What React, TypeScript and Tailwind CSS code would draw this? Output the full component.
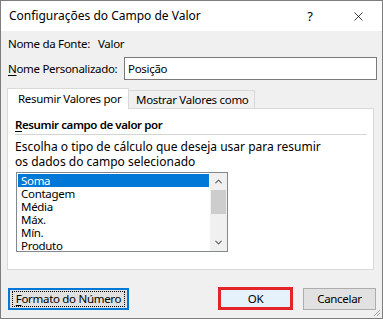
import { X, ChevronUp, ChevronDown } from "lucide-react";

const font = { fontFamily: '"Noto Sans", "Open Sans", sans-serif' };

const items = ["Soma", "Contagem", "Média", "Máx.", "Mín.", "Produto"];

export default function App() {
  return (
    <div
      className="flex h-[319px] w-[383px] flex-col overflow-hidden whitespace-nowrap border border-[#7d7d7d] text-[11.5px] leading-[16px] tracking-[-0.3px] text-black"
      style={font}
    >
      {/* title bar */}
      <div className="flex h-[30px] shrink-0 items-center bg-white pl-[8px] text-[12px] tracking-normal">
        <span>Configurações do Campo de Valor</span>
        <span className="ml-auto mr-[38px] text-[13px]">?</span>
        <X size={15} strokeWidth={1.2} className="mr-[16px]" />
      </div>

      {/* body */}
      <div className="relative flex flex-1 flex-col bg-[#f0f0f0] px-[6px]">
        <div className="mt-[5px] flex h-[16px] items-center pl-[1px]">
          <span className="w-[90px] shrink-0">Nome da Fonte:</span>
          <span>Valor</span>
        </div>

        <div className="mt-[5px] flex h-[23px] items-center pl-[1px]">
          <span className="w-[116px] shrink-0">
            <span className="underline underline-offset-2">N</span>ome
            Personalizado:
          </span>
          <div className="flex h-[23px] w-[253px] shrink-0 items-center border border-[#7a7a7a] bg-white pl-[3px]">
            Posição
          </div>
        </div>

        {/* tabs */}
        <div className="mt-[8px] flex items-end">
          <div className="relative z-10 -mb-px flex h-[21px] w-[122px] shrink-0 items-center border border-b-0 border-[#d9d9d9] bg-white pl-[10px] pb-[1px]">
            Resumir Valores por
          </div>
          <div className="flex h-[18px] w-[126px] shrink-0 items-center border border-b-0 border-l-0 border-[#d9d9d9] bg-[#f0f0f0] pl-[7px]">
            Mostrar Valores como
          </div>
        </div>

        {/* panel */}
        <div className="flex h-[162px] w-[367px] flex-col border border-[#d9d9d9] bg-white px-[7px]">
          <div className="mt-[8px] font-semibold leading-[16px] tracking-[-0.4px]">
            <span className="underline underline-offset-2">R</span>esumir campo
            de valor por
          </div>
          <div className="mt-[1px] mr-[-1px] h-px bg-[#d5d5d5]" />
          <div className="mt-[5px] text-[12px] leading-[14.5px] tracking-normal">
            Escolha o tipo de cálculo que deseja usar para resumir
            <br />
            os dados do campo selecionado
          </div>

          <div className="ml-[1px] mt-[3px] flex h-[80px] w-[212px] border border-[#828790] bg-white">
            <div className="flex flex-1 flex-col p-px">
              {items.map((it, i) => (
                <div
                  key={it}
                  className={`flex h-[13px] items-center pl-[3px] leading-[13px] ${
                    i === 0 ? "bg-[#0078d7] text-white" : ""
                  }`}
                >
                  {it}
                </div>
              ))}
            </div>
            <div className="flex w-[17px] flex-col bg-[#f0f0f0]">
              <div className="flex h-[17px] items-center justify-center">
                <ChevronUp size={11} strokeWidth={2.5} color="#606060" />
              </div>
              <div className="mx-[1px] h-[24px] bg-[#cdcdcd]" />
              <div className="flex-1" />
              <div className="flex h-[17px] items-center justify-center">
                <ChevronDown size={11} strokeWidth={2.5} color="#606060" />
              </div>
            </div>
          </div>
        </div>

        {/* buttons */}
        <div className="mt-[17px] flex items-center">
          <div className="ml-[1px] flex h-[22px] w-[121px] shrink-0 items-center justify-center border-2 border-[#0078d7] bg-[#e1e1e1]">
            <div className="flex h-[16px] w-[113px] items-center justify-center border border-dotted border-black">
              <span>
                <span className="underline underline-offset-2">F</span>ormato
                do Número
              </span>
            </div>
          </div>
          <div className="ml-[89px] flex h-[23px] w-[75px] shrink-0 items-center justify-center border-[3px] border-[#e3242b] bg-[#e5f1fb]">
            OK
          </div>
          <div className="ml-[10px] flex h-[22px] w-[73px] shrink-0 items-center justify-center border border-[#adadad] bg-[#e1e1e1]">
            Cancelar
          </div>
        </div>

        {/* resize grip */}
        <svg
          className="absolute bottom-[1px] right-[1px]"
          width="8"
          height="8"
          viewBox="0 0 8 8"
        >
          <path d="M7 1 L1 7 M7 4 L4 7" stroke="#a0a0a0" strokeWidth="1" />
        </svg>
      </div>
    </div>
  );
}
